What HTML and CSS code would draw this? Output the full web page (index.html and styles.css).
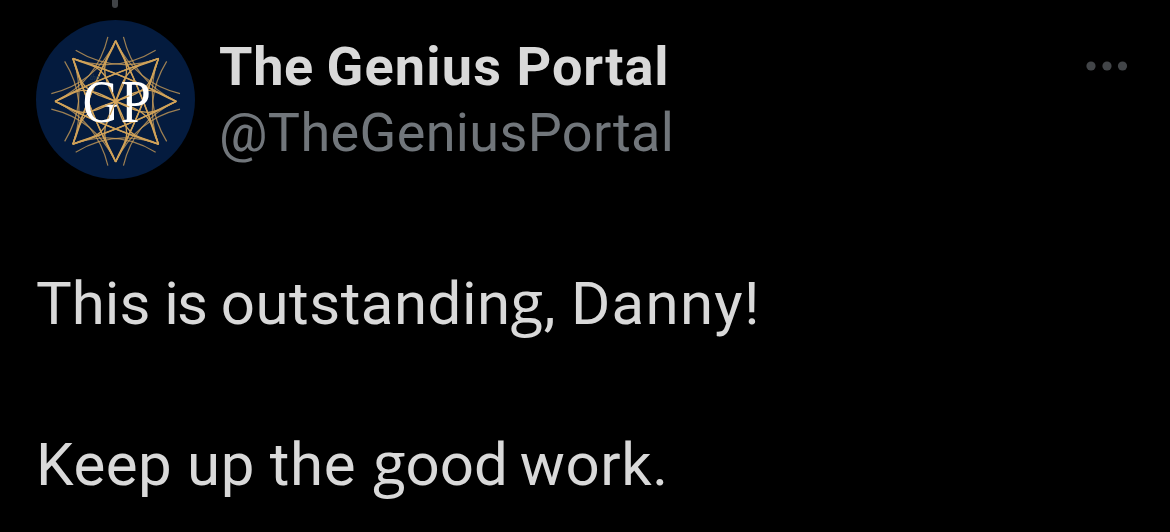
FILE: index.html
```html
<!DOCTYPE html>
<html lang="en">
<head>
<meta charset="utf-8">
<title>Post</title>
<link rel="stylesheet" href="styles.css">
</head>
<body>
<article class="post">
  <div class="thread-line"></div>
  <header class="header">
    <svg class="avatar" viewBox="0 0 477 477">
      <defs>
        <g id="ray">
          <path d="M0-182Q85-15 128 129" stroke-width="4.2"/>
          <path d="M0-182Q-85-15-128 129" stroke-width="4.2"/>
          <path d="M-128-128Q5-82 120-153" stroke-width="3.6" opacity=".75"/>
          <path d="M128-128Q-5-82-120-153" stroke-width="3.6" opacity=".75"/>
          <path d="M0 0C-20-42-34-68-33-98S-14-140 0-182" stroke-width="4"/>
          <path d="M0 0C20-42 34-68 33-98S14-140 0-182" stroke-width="4"/>
        </g>
      </defs>
      <circle cx="238.5" cy="238.5" r="238.5" fill="#041b3e"/>
      <g transform="translate(239 244)" fill="none" stroke="#d0a259">
        <use href="#ray"/>
        <use href="#ray" transform="rotate(45)"/>
        <use href="#ray" transform="rotate(90)"/>
        <use href="#ray" transform="rotate(135)"/>
        <use href="#ray" transform="rotate(180)"/>
        <use href="#ray" transform="rotate(225)"/>
        <use href="#ray" transform="rotate(270)"/>
        <use href="#ray" transform="rotate(315)"/>
      </g>
      <text x="162" y="180" class="logo-small">the</text>
      <text x="140" y="305" class="logo-letter" textLength="108" lengthAdjust="spacingAndGlyphs">G</text>
      <text x="254" y="305" class="logo-letter" textLength="90" lengthAdjust="spacingAndGlyphs">P</text>
      <path d="M198 227L280 261M198 261L280 227M222 203L256 285M256 203L222 285" stroke="#d0a259" stroke-width="3.5"/>
      <circle cx="239" cy="244" r="8" fill="#d5a55b"/>
    </svg>
    <div class="names">
      <div class="name"><span class="n1">The</span> <span class="n2">Genius</span> <span class="n3">Portal</span></div>
      <div class="handle">@TheGeniusPortal</div>
    </div>
    <svg class="more" viewBox="0 0 42 10"><circle cx="5" cy="5" r="4.6"/><circle cx="21" cy="5" r="4.6"/><circle cx="36.5" cy="5" r="4.6"/></svg>
  </header>
  <div class="body">
    <p class="line first"><span class="a1">This</span> <span class="a2">is</span> <span class="a3">outstandin<span class="g">g</span>,</span> <span class="a4">Danny!</span></p>
    <p class="line second"><span class="b1">Keep</span> <span class="b2">up</span> <span class="b3">the</span> <span class="b4"><span class="g">g</span>ood</span> <span class="b5">work.</span></p>
  </div>
</article>
</body>
</html>
```
FILE: styles.css
```css
body { margin: 0; background: #000; overflow: hidden; }
.post { width: 1170px; height: 532px; font-family: Roboto, "Liberation Sans", sans-serif; color: #d9d9d9; }
.thread-line { width: 6px; height: 8px; margin-left: 112px; border-radius: 0 0 3px 3px; background: #404346; }
.header { display: flex; align-items: flex-start; padding: 12px 42px 0 36px; }
.avatar { width: 159px; height: 159px; flex: none; }
.logo-letter { font: 182px "Liberation Serif", serif; fill: #fff; }
.logo-small { font: italic 22px "Liberation Serif", serif; fill: #284058; }
.names { flex: 1; padding: 14px 0 0 24px; white-space: nowrap; }
.name { font-size: 54px; font-weight: 700; line-height: 66px; }
.handle { font-size: 54px; line-height: 66px; letter-spacing: .36px; color: #71767b; }
.more { width: 42px; height: 10px; margin-top: 41px; fill: #424548; }
.body { padding: 85px 36px 0; }
.line { margin: 0; font-size: 60px; line-height: 80px; height: 80px; white-space: nowrap; }
.second { margin-top: 81px; }
.g { font-family: "Open Sans", sans-serif; line-height: 1; }

/* Optical spacing per word */
.n1 { letter-spacing: .7px; }
.n2 { letter-spacing: 1.2px; margin-left: -1px; }
.n3 { letter-spacing: .9px; margin-left: 1px; }
.a2 { margin-left: -1px; letter-spacing: -2px; }
.a3 { letter-spacing: .5px; }
.a4 { letter-spacing: 1.3px; }
.second { margin-left: 0; }
.b1, .b2 { letter-spacing: .5px; }
.b3 { margin-left: 0; letter-spacing: .6px; }
.b4 { margin-left: 2px; }
.b5 { margin-left: -3px; letter-spacing: .6px; }
```
